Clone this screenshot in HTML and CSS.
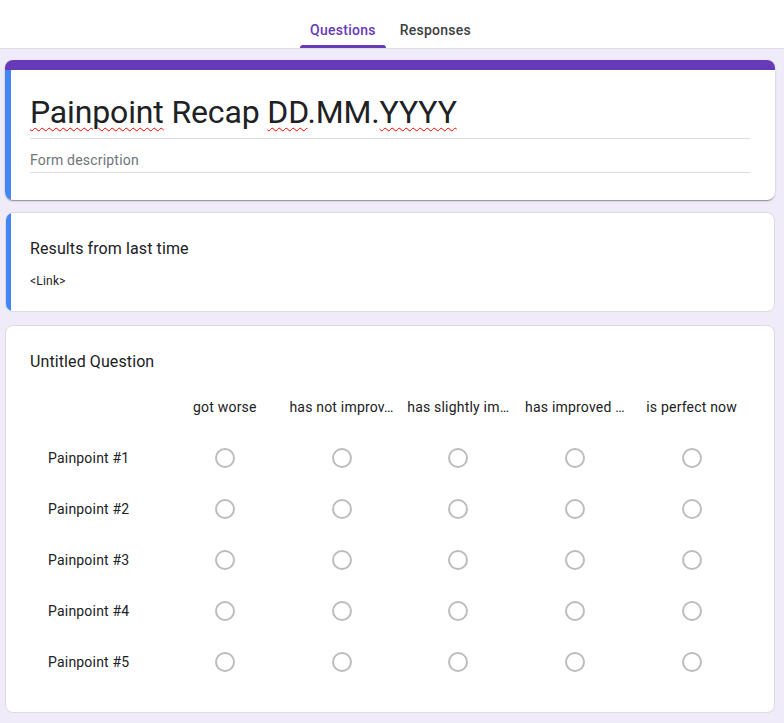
FILE: index.html
```html
<!DOCTYPE html>
<html lang="en">
<head>
<meta charset="utf-8">
<title>Painpoint Recap DD.MM.YYYY</title>
<link rel="stylesheet" href="styles.css">
</head>
<body>
<header class="topbar">
  <nav class="tabs">
    <div class="tab tab-active">Questions</div>
    <div class="tab">Responses</div>
  </nav>
</header>
<main class="page">
  <section class="card card-head">
    <div class="head-bar"></div>
    <div class="head-body">
      <div class="form-title"><span class="misspelled">Painpoint</span> Recap <span class="misspelled">DD</span>.MM.<span class="misspelled">YYYY</span></div>
      <div class="form-desc">Form description</div>
    </div>
  </section>

  <section class="card card-bordered card-accent">
    <div class="section-title">Results from last time</div>
    <div class="section-text">&lt;Link&gt;</div>
  </section>

  <section class="card card-bordered card-question">
    <div class="section-title">Untitled Question</div>
    <div class="grid">
      <div class="cell"></div>
      <div class="cell col-head">got worse</div>
      <div class="cell col-head">has not improv…</div>
      <div class="cell col-head">has slightly im…</div>
      <div class="cell col-head">has improved …</div>
      <div class="cell col-head">is perfect now</div>

      <div class="cell row-label">Painpoint #1</div>
      <div class="cell"><span class="radio"></span></div>
      <div class="cell"><span class="radio"></span></div>
      <div class="cell"><span class="radio"></span></div>
      <div class="cell"><span class="radio"></span></div>
      <div class="cell"><span class="radio"></span></div>

      <div class="cell row-label">Painpoint #2</div>
      <div class="cell"><span class="radio"></span></div>
      <div class="cell"><span class="radio"></span></div>
      <div class="cell"><span class="radio"></span></div>
      <div class="cell"><span class="radio"></span></div>
      <div class="cell"><span class="radio"></span></div>

      <div class="cell row-label">Painpoint #3</div>
      <div class="cell"><span class="radio"></span></div>
      <div class="cell"><span class="radio"></span></div>
      <div class="cell"><span class="radio"></span></div>
      <div class="cell"><span class="radio"></span></div>
      <div class="cell"><span class="radio"></span></div>

      <div class="cell row-label">Painpoint #4</div>
      <div class="cell"><span class="radio"></span></div>
      <div class="cell"><span class="radio"></span></div>
      <div class="cell"><span class="radio"></span></div>
      <div class="cell"><span class="radio"></span></div>
      <div class="cell"><span class="radio"></span></div>

      <div class="cell row-label">Painpoint #5</div>
      <div class="cell"><span class="radio"></span></div>
      <div class="cell"><span class="radio"></span></div>
      <div class="cell"><span class="radio"></span></div>
      <div class="cell"><span class="radio"></span></div>
      <div class="cell"><span class="radio"></span></div>
    </div>
  </section>
</main>
</body>
</html>
```

FILE: styles.css
```css
html, body {
  margin: 0;
  padding: 0;
}
body {
  background: #f0ebf8;
  font-family: Roboto, "Liberation Sans", Arial, sans-serif;
  color: #202124;
  height: 723px;
  overflow: hidden;
}
.topbar {
  background: #fff;
  height: 48px;
  border-bottom: 1px solid #dadce0;
  box-sizing: content-box;
}
.tabs {
  display: flex;
  justify-content: center;
  gap: 3px;
  height: 48px;
  padding-right: 3px;
}
.tab {
  box-sizing: border-box;
  height: 48px;
  padding: 20px 10.5px 0;
  font-size: 14px;
  font-weight: 500;
  line-height: 20px;
  color: #3c4043;
  letter-spacing: 0.25px;
}
.tab-active {
  color: #673ab7;
  position: relative;
}
.tab-active::after {
  content: "";
  position: absolute;
  left: 0;
  right: 0;
  bottom: 0;
  height: 3px;
  background: #673ab7;
  border-radius: 3px 3px 0 0;
}
.page {
  display: flex;
  flex-direction: column;
  gap: 12px;
  padding: 11px 9px 0 5px;
}
.card {
  background: #fff;
  border-radius: 8px;
}
.card-head {
  overflow: hidden;
  box-shadow: 0 2px 1px -1px rgba(0,0,0,.2), 0 1px 1px 0 rgba(0,0,0,.14), 0 1px 3px 0 rgba(0,0,0,.12);
}
.head-bar {
  height: 10px;
  background: #673ab7;
}
.head-body {
  border-left: 6px solid #4285f4;
  padding: 22px 25px 27px 19px;
}
.form-title {
  font-size: 32px;
  line-height: 40px;
  color: #202124;
  letter-spacing: -0.15px;
  padding-bottom: 6px;
  border-bottom: 1px solid #dadce0;
}
.misspelled {
  text-decoration-line: underline;
  text-decoration-style: wavy;
  text-decoration-color: #ff0000;
  text-decoration-thickness: 1px;
  text-underline-offset: 4px;
}
.form-desc {
  margin-top: 11px;
  font-size: 14px;
  line-height: 20px;
  letter-spacing: 0.2px;
  color: #70757a;
  padding-bottom: 2px;
  border-bottom: 1px solid #dadce0;
}
.card-bordered {
  border: 1px solid #dadce0;
  padding: 23px 24px 24px;
}
.card-accent {
  position: relative;
  overflow: hidden;
  height: 100px;
  box-sizing: border-box;
  padding-top: 24px;
}
.card-accent::before {
  content: "";
  position: absolute;
  left: -1px;
  top: -1px;
  bottom: -1px;
  width: 6px;
  background: #4285f4;
}
.section-title {
  font-size: 16px;
  line-height: 24px;
  letter-spacing: 0.1px;
  color: #202124;
}
.section-text {
  margin-top: 12px;
  font-size: 12px;
  line-height: 16px;
  letter-spacing: 0.2px;
  color: #202124;
}
.card-question {
  margin-top: 1px;
  padding-top: 24px;
  padding-bottom: 24px;
}
.grid {
  display: grid;
  grid-template-columns: 136.5px repeat(5, 1fr);
  grid-auto-rows: 51px;
  margin-top: 7.5px;
}
.cell {
  display: flex;
  align-items: center;
  justify-content: center;
  font-size: 14px;
  line-height: 20px;
  letter-spacing: 0.2px;
  color: #202124;
  white-space: nowrap;
  overflow: hidden;
}
.row-label {
  justify-content: flex-start;
  padding-left: 18px;
}
.radio {
  width: 20px;
  height: 20px;
  box-sizing: border-box;
  border: 2px solid #bdbdbd;
  border-radius: 50%;
}
```
